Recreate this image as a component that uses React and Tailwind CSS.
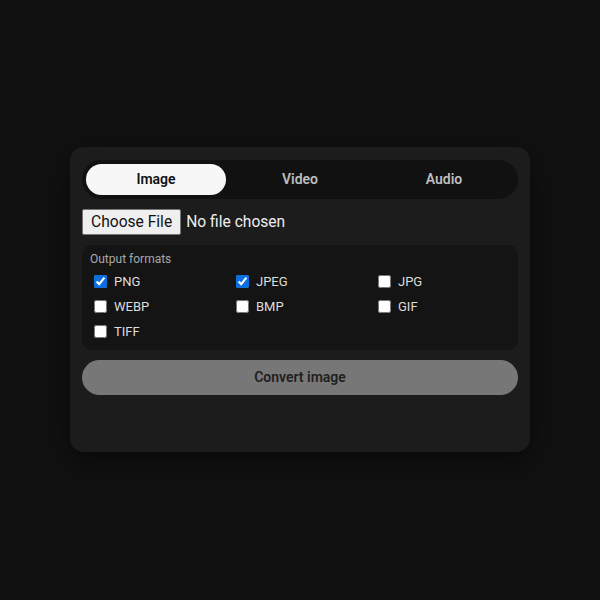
import React, { useState } from "react";

const FORMATS = ["PNG", "JPEG", "JPG", "WEBP", "BMP", "GIF", "TIFF"];

export default function App() {
  const [tab, setTab] = useState("Image");
  const [checked, setChecked] = useState({ PNG: true, JPEG: true });
  const tabs = ["Image", "Video", "Audio"];
  return (
    <div
      className="w-[600px] h-[600px] bg-[#111111] flex items-start justify-center pt-[147px]"
      style={{ fontFamily: "Roboto, 'Liberation Sans', sans-serif" }}
    >
      <div className="w-[460px] bg-[#1c1c1c] rounded-[14px] px-3 pt-[13px] pb-[57px] flex flex-col gap-[10px] shadow-[0_10px_30px_rgba(0,0,0,0.5)]">
        <div className="h-[39px] bg-[#111111] rounded-full p-1 grid grid-cols-3 gap-1">
          {tabs.map((t) => (
            <button
              key={t}
              onClick={() => setTab(t)}
              className={
                t === tab
                  ? "rounded-full bg-[#f7f7f7] text-[#111111] text-[14px] font-semibold"
                  : "rounded-full text-[#bdbdbd] text-[14px] font-semibold"
              }
            >
              {t}
            </button>
          ))}
        </div>
        <input
          type="file"
          className="text-[15.6px] leading-[20px] text-[#eeeeee] h-[26px] file:h-[26px] file:bg-[#efefef] file:text-[#111111] file:border file:border-[#767676] file:rounded-[2px] file:px-2 file:mr-[5px]"
        />
        <div className="bg-[#141414] rounded-[10px] pl-2 pr-1 pt-[6px] pb-[6px] flex flex-col gap-[2px]">
          <div className="text-[12px] leading-[16px] text-[#a8a8a8]">Output formats</div>
          <div className="grid grid-cols-[142px_142px_142px]">
            {FORMATS.map((f) => (
              <label key={f} className="h-[25px] flex items-center gap-[7px] pl-1 text-[13px] text-[#dddddd]">
                <input
                  type="checkbox"
                  checked={!!checked[f]}
                  onChange={() => setChecked({ ...checked, [f]: !checked[f] })}
                  className="w-[13px] h-[13px] accent-[#0b6fe0]"
                />
                {f}
              </label>
            ))}
          </div>
        </div>
        <button className="h-[35px] rounded-full bg-[#777777] text-[#1f1f1f] text-[14px] font-semibold">
          Convert {tab.toLowerCase()}
        </button>
      </div>
    </div>
  );
}
